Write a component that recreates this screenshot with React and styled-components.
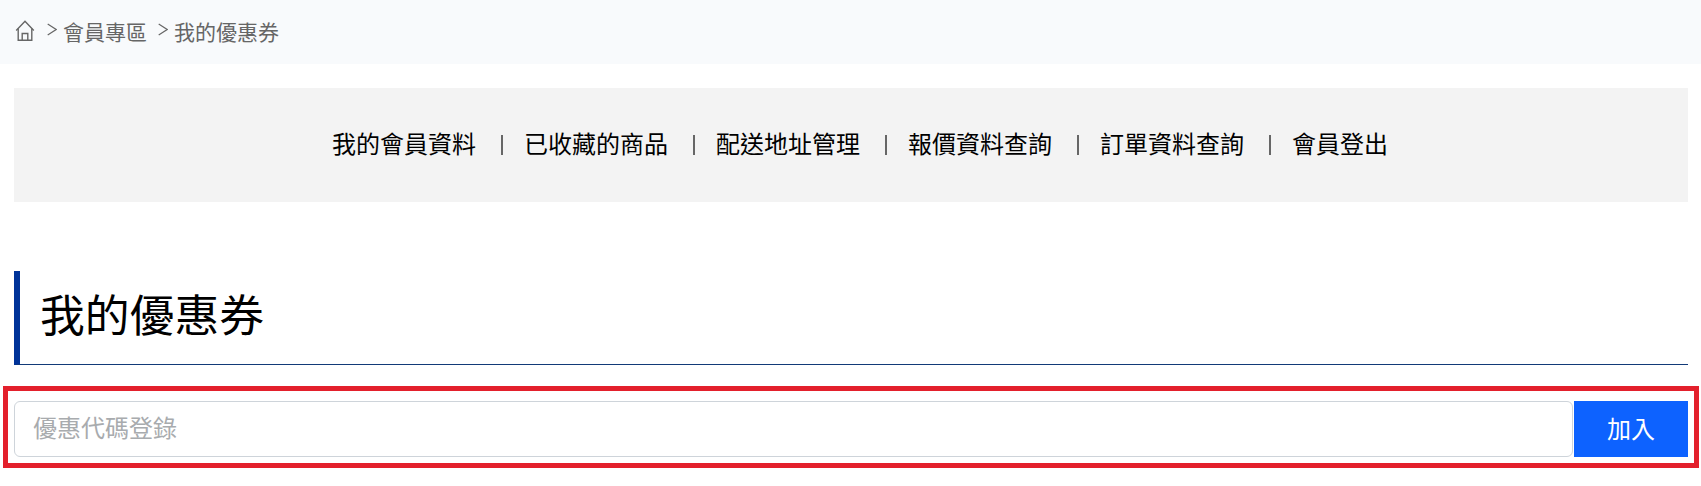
import React from 'react';
import styled, { createGlobalStyle } from 'styled-components';

const GlobalStyle = createGlobalStyle`
  html, body {
    margin: 0;
    padding: 0;
    background: #fff;
  }
  body {
    font-family: "Liberation Sans", "Noto Sans CJK TC", sans-serif;
  }
`;

const Page = styled.div`
  width: 1701px;
  height: 486px;
  overflow: hidden;
`;

const Breadcrumb = styled.nav`
  display: flex;
  align-items: center;
  height: 64px;
  padding: 0 0 3px 15px;
  box-sizing: border-box;
  background: #f8fafc;
  color: #666;
  font-size: 21px;
`;

const Crumb = styled.span`
  display: flex;
  align-items: center;
  margin-left: ${props => props.$gap || 0}px;
`;

const Arrow = styled.svg`
  width: 10px;
  height: 13px;
  margin-right: 6px;
  margin-top: -3px;
  fill: none;
  stroke: #666;
  stroke-width: 1.2;
`;

const HomeIcon = styled.svg`
  flex: none;
  width: 20px;
  height: 21px;
  fill: none;
  stroke: #666;
  stroke-width: 1.4;
`;

const Content = styled.div`
  padding: 24px 13px 0 14px;
`;

const MemberMenu = styled.ul`
  display: flex;
  justify-content: center;
  align-items: center;
  height: 114px;
  margin: 0;
  padding: 0 0 1px 18px;
  box-sizing: border-box;
  list-style: none;
  background: #f3f3f3;
`;

const MenuItem = styled.li`
  display: flex;
  align-items: center;
  color: #000;
  font-size: 24px;
  line-height: 32px;

  & + &::before {
    content: "";
    width: 2px;
    height: 20px;
    margin: 0 21px 0 25px;
    background: #666;
  }
`;

const Title = styled.h1`
  display: flex;
  align-items: center;
  box-sizing: content-box;
  height: 83px;
  margin: 69px 0 0;
  padding: 0 0 10px 20px;
  border-left: 6px solid #003399;
  border-bottom: 1px solid #123a78;
  color: #000;
  font-size: 44.8px;
  font-weight: 400;
`;

const Highlight = styled.div`
  margin: 21px -11px 0;
  padding: 10px 6px 6px;
  border: 5px solid #e3202c;
`;

const CouponForm = styled.form`
  display: flex;
  height: 56px;
`;

const CouponInput = styled.input`
  flex: 1;
  min-width: 0;
  box-sizing: border-box;
  padding: 0 18px;
  border: 1px solid #ced4da;
  border-radius: 6px;
  outline: none;
  font-family: inherit;
  font-size: 24px;

  &::placeholder {
    color: #a8abae;
  }
`;

const AddButton = styled.button`
  width: 114px;
  margin-left: 1px;
  padding: 0 0 3px;
  border: 0;
  background: #0d62ff;
  color: #fff;
  font-family: inherit;
  font-size: 24px;
`;

export default function App() {
  return (
    <Page>
      <GlobalStyle />
      <Breadcrumb>
        <HomeIcon viewBox="0 0 20 21">
          <path d="M1.200 10.500 10 1.200l8.800 9.300" />
          <path d="M3.200 8.500v11.800h13.600V8.500" />
          <path d="M7.200 20.300V13.500h5.600v6.800" />
        </HomeIcon>
        <Crumb $gap={12}>
          <Arrow viewBox="0 0 10 13"><path d="M.7 1l8.500 5.500L.7 12" /></Arrow>
          會員專區
        </Crumb>
        <Crumb $gap={11}>
          <Arrow viewBox="0 0 10 13"><path d="M.7 1l8.500 5.500L.7 12" /></Arrow>
          我的優惠券
        </Crumb>
      </Breadcrumb>
      <Content>
        <MemberMenu>
          <MenuItem>我的會員資料</MenuItem>
          <MenuItem>已收藏的商品</MenuItem>
          <MenuItem>配送地址管理</MenuItem>
          <MenuItem>報價資料查詢</MenuItem>
          <MenuItem>訂單資料查詢</MenuItem>
          <MenuItem>會員登出</MenuItem>
        </MemberMenu>
        <Title>我的優惠券</Title>
        <Highlight>
          <CouponForm onSubmit={e => e.preventDefault()}>
            <CouponInput placeholder="優惠代碼登錄" />
            <AddButton type="submit">加入</AddButton>
          </CouponForm>
        </Highlight>
      </Content>
    </Page>
  );
}
